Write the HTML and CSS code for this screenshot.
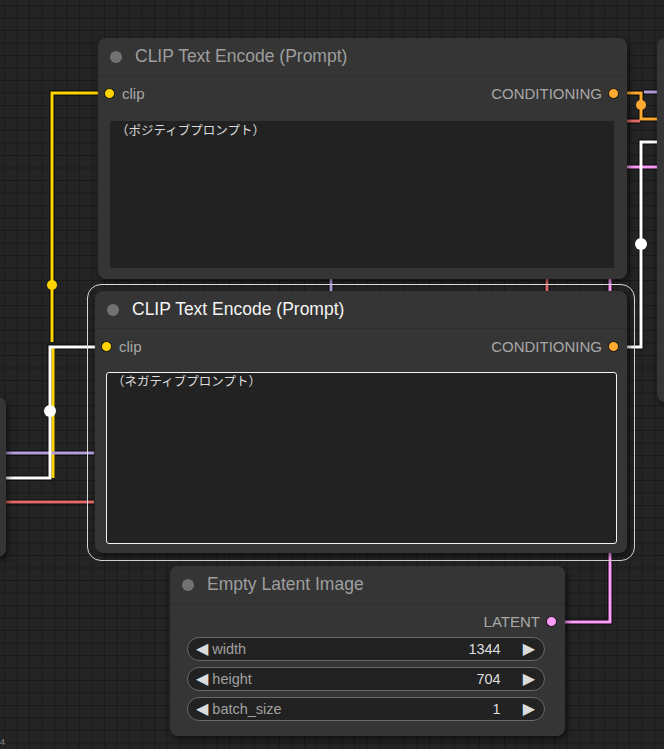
FILE: index.html
```html
<!DOCTYPE html>
<html>
<head>
<meta charset="utf-8">
<link rel="stylesheet" href="styles.css">
</head>
<body>
<div class="canvas">
  <div class="node stub-left"></div>
  <div class="node stub-right"></div>

  <svg class="wires" width="664" height="749" viewBox="0 0 664 749">
    <g class="shadow">
      <path d="M105 93 H52 V342"/>
      <path d="M0 453 H94"/>
      <path d="M0 502 H94"/>
      <path d="M331 279 V291"/>
      <path d="M547 279 V291"/>
      <path d="M610 279 V291"/>
      <path d="M560 622 H610 V553"/>
      <path d="M620 93 H641 V119 H657"/>
      <path d="M644 92 H657"/>
      <path d="M627 121 H640"/>
      <path d="M627 167 H657"/>
      <path d="M620 347 H641 V142 H657"/>
      <path d="M100 347 H50 V478 H0"/>
    </g>
    <path class="w clip" d="M105 93 H52 V342"/>
    <path class="w clip" d="M53 347 V478"/>
    <path class="w model" d="M0 453 H94"/>
    <path class="w vae" d="M0 502 H94"/>
    <path class="w model" d="M331 279 V291"/>
    <path class="w vae" d="M547 279 V291"/>
    <path class="w latent" d="M610 279 V291"/>
    <path class="w latent" d="M560 622 H610 V553"/>
    <path class="w model" d="M644 92 H657"/>
    <path class="w vae" d="M627 121 H640"/>
    <path class="w cond" d="M620 93 H641 V119 H657"/>
    <path class="w latent" d="M627 167 H657"/>
    <path class="w sel" d="M620 347 H641 V142 H657"/>
    <path class="w sel" d="M100 347 H50 V478 H0"/>
    <circle class="dot-clip" cx="52" cy="285" r="5"/>
    <circle class="dot-cond" cx="641" cy="105" r="5"/>
    <circle class="dot-sel" cx="50" cy="411" r="6"/>
    <circle class="dot-sel" cx="641" cy="244" r="6"/>
  </svg>

  <div class="node n1">
    <div class="title"><span class="tdot"></span><span class="ttext">CLIP Text Encode (Prompt)</span></div>
    <div class="slots">
      <div class="slot-in"><span class="sdot yellow"></span>clip</div>
      <div class="slot-out">CONDITIONING<span class="sdot orange"></span></div>
    </div>
    <div class="text-area ta1">（ポジティブプロンプト）</div>
  </div>

  <div class="selection"></div>
  <div class="node n2">
    <div class="title"><span class="tdot"></span><span class="ttext sel-title">CLIP Text Encode (Prompt)</span></div>
    <div class="slots">
      <div class="slot-in"><span class="sdot yellow"></span>clip</div>
      <div class="slot-out">CONDITIONING<span class="sdot orange"></span></div>
    </div>
    <div class="text-area ta2">（ネガティブプロンプト）</div>
  </div>

  <div class="node n3">
    <div class="title"><span class="tdot"></span><span class="ttext">Empty Latent Image</span></div>
    <div class="slots">
      <div class="slot-in"></div>
      <div class="slot-out">LATENT<span class="sdot pink"></span></div>
    </div>
    <div class="widgets">
      <div class="widget"><span class="arr">◀</span><span class="wlabel">width</span><span class="wval">1344</span><span class="arr">▶</span></div>
      <div class="widget"><span class="arr">◀</span><span class="wlabel">height</span><span class="wval">704</span><span class="arr">▶</span></div>
      <div class="widget"><span class="arr">◀</span><span class="wlabel">batch_size</span><span class="wval">1</span><span class="arr">▶</span></div>
    </div>
  </div>

  <div class="corner-label">4</div>
</div>
</body>
</html>
```

FILE: styles.css
```css
* { box-sizing: border-box; }
html, body { margin: 0; padding: 0; }
body {
  width: 664px;
  height: 749px;
  overflow: hidden;
  background: #222;
  font-family: "Liberation Sans", Arial, sans-serif;
}
.canvas {
  position: relative;
  width: 664px;
  height: 749px;
  overflow: hidden;
  background-color: #242424;
  background-image:
    linear-gradient(to right, #1a1a1a 1px, transparent 1px),
    linear-gradient(to bottom, #1a1a1a 1px, transparent 1px);
  background-size: 12.5px 12.5px;
  background-position: 4px 5px;
}
.wires {
  position: absolute;
  left: 0;
  top: 0;
  z-index: 1;
}
.wires path { fill: none; stroke-linejoin: miter; }
.shadow path { stroke: rgba(0,0,0,0.75); stroke-width: 5; }
.w { stroke-width: 3; }
.clip { stroke: #ffd500; }
.model { stroke: #b39ddb; }
.vae { stroke: #e46a6a; }
.latent { stroke: #ff9cf9; }
.cond { stroke: #ffa931; }
.sel { stroke: #ffffff; }
.dot-clip { fill: #ffd500; }
.dot-cond { fill: #ffa931; }
.dot-sel { fill: #ffffff; }

.node {
  position: absolute;
  z-index: 2;
  background: #353535;
  border-radius: 8px;
  box-shadow: 2px 3px 6px rgba(0,0,0,0.55);
  display: flex;
  flex-direction: column;
}
.stub-left { left: -20px; top: 397px; width: 26px; height: 160px; }
.stub-right { left: 657px; top: 38px; width: 40px; height: 364px; }

.n1 { left: 98px; top: 38px; width: 529px; height: 241px; }
.n2 { left: 95px; top: 291px; width: 532px; height: 262px; }
.n3 { left: 170px; top: 566px; width: 395px; height: 170px; }

.selection {
  position: absolute;
  z-index: 2;
  left: 87px;
  top: 284px;
  width: 548px;
  height: 277px;
  border: 1.5px solid #d8d8d8;
  border-radius: 14px;
}

.title {
  height: 38px;
  display: flex;
  align-items: center;
  padding-left: 12px;
  border-bottom: 1px solid #2e2e2e;
  flex-shrink: 0;
}
.tdot {
  width: 12px;
  height: 12px;
  border-radius: 50%;
  background: #727272;
  margin-right: 13px;
}
.ttext {
  font-size: 17.5px;
  color: #9e9e9e;
  white-space: nowrap;
}
.sel-title { color: #f4f4f4; }

.slots {
  display: flex;
  justify-content: space-between;
  align-items: center;
  height: 20px;
  margin-top: 7px;
  font-size: 15px;
  color: #a8a8a8;
}
.slot-in {
  display: flex;
  align-items: center;
  padding-left: 6px;
}
.slot-in .sdot { margin-right: 7px; }
.slot-out {
  display: flex;
  align-items: center;
  padding-right: 8px;
}
.slot-out .sdot { margin-left: 6px; }
.sdot {
  width: 11px;
  height: 11px;
  border-radius: 50%;
  border: 1px solid #111;
  display: inline-block;
}
.yellow { background: #ffd500; }
.orange { background: #ffa931; }
.pink { background: #ff9cf9; }

.text-area {
  background: #222;
  color: #dcdcdc;
  font-family: "Noto Sans CJK JP", sans-serif;
  font-size: 12.5px;
  line-height: 16px;
  padding: 1px 6px;
}
.ta1 {
  margin: 18px 13px 0 12px;
  height: 147px;
}
.ta2 {
  margin: 16px 10px 0 11px;
  height: 172px;
  border: 1px solid #f2f2f2;
  border-radius: 3px;
  padding: 0 5px;
}

.widgets {
  display: flex;
  flex-direction: column;
  gap: 6px;
  margin: 6px 20px 0 17px;
}
.widget {
  height: 24px;
  border: 1px solid #6a6a6a;
  border-radius: 12px;
  background: #222;
  display: flex;
  align-items: center;
  padding: 0 9px 0 8px;
  font-size: 14.5px;
}
.arr {
  color: #dcdcdc;
  font-family: "DejaVu Sans", sans-serif;
  font-size: 16px;
  line-height: 1;
}
.wlabel {
  color: #a0a0a0;
  margin-left: 4px;
  flex: 1;
}
.wval {
  color: #dedede;
  margin-right: 22px;
}

.corner-label {
  position: absolute;
  left: 0;
  top: 737px;
  font-size: 9px;
  color: #888;
  z-index: 3;
}
```
